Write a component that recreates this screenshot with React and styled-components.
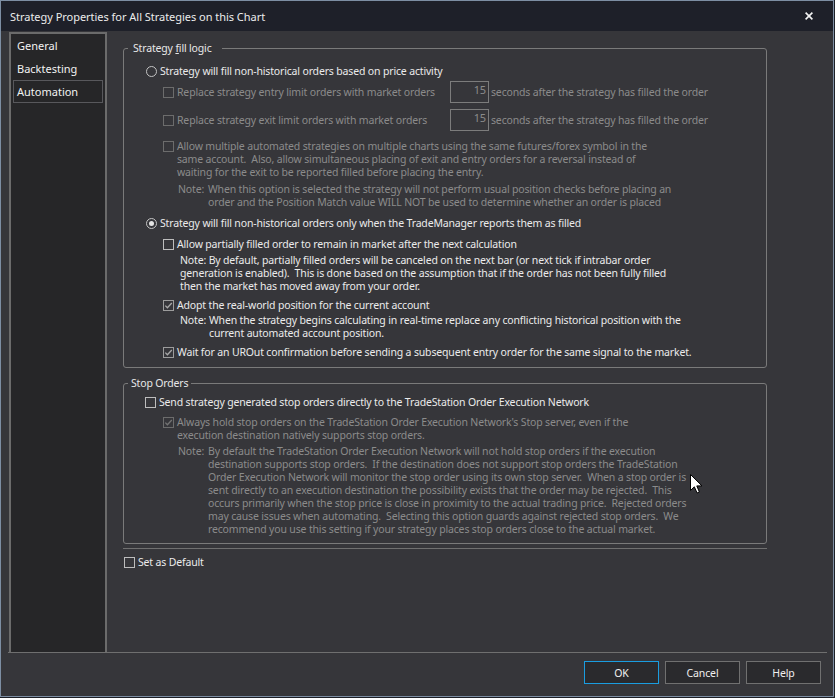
import React from "react";
import styled, { createGlobalStyle, css } from "styled-components";

const GlobalStyle = createGlobalStyle`
  html, body { margin: 0; padding: 0; }
  body {
    background: #1c1f26;
    font-family: "Noto Sans", "Open Sans", sans-serif;
  }
`;

const bodyText = css`
  font-size: 10.5px;
  letter-spacing: -0.16px;
  line-height: 13px;
`;

const Window = styled.div`
  position: relative;
  box-sizing: border-box;
  width: 834px;
  height: 697px;
  border: 1px solid #7d8ea3;
  background: #36363a;
  display: flex;
  flex-direction: column;
  overflow: hidden;
`;

const TitleBar = styled.div`
  flex: none;
  height: 30px;
  background: #1e2029;
  display: flex;
  align-items: center;
  padding-left: 9px;
  color: #ececec;
  font-size: 11px;
  letter-spacing: -0.03px;
`;

const Title = styled.span`
  flex: 1;
`;

const CloseButton = styled.span`
  width: 30px;
  height: 30px;
  margin-right: 9px;
  display: flex;
  align-items: center;
  justify-content: center;
`;

const Body = styled.div`
  flex: 1;
  min-height: 0;
  display: flex;
  flex-direction: column;
`;

const Main = styled.div`
  flex: 1;
  min-height: 0;
  display: flex;
  margin: 1px 6px 0 7px;
  border-bottom: 1px solid #6f6f6f;
`;

const Nav = styled.div`
  flex: none;
  width: 98px;
  margin-left: 1px;
  box-sizing: border-box;
  border: 2px solid #6b6b6b;
  border-bottom: none;
  background: #262628;
  padding-top: 0;
`;

const NavItem = styled.div`
  height: 23px;
  box-sizing: border-box;
  margin: 0 2px;
  padding-left: 3px;
  display: flex;
  align-items: center;
  font-size: 11px;
  color: #f2f2f2;
  border: 1px solid ${(p) => (p.$active ? "#58585c" : "transparent")};
`;

const Content = styled.div`
  flex: 1;
  padding: 9px 0 0 16px;
  display: flex;
  flex-direction: column;
  align-items: flex-start;
`;

const Group = styled.fieldset`
  margin: ${(p) => p.$mt || 0}px 0 0 0;
  padding: 0 0 ${(p) => p.$pb}px 0;
  min-width: 0;
  width: 644px;
  box-sizing: border-box;
  border: 1px solid #7a7a7a;
  border-radius: 3px;
`;

const Legend = styled.legend`
  margin-left: 4px;
  padding: 0 ${(p) => p.$pr}px 0 ${(p) => p.$pl}px;
  ${bodyText};
  line-height: 14px;
  color: #e8e8e8;
`;

const GroupBody = styled.div`
  padding-top: ${(p) => p.$pt}px;
  display: flex;
  flex-direction: column;
`;

const Option = styled.div`
  display: flex;
  align-items: flex-start;
  margin-top: ${(p) => p.$mt || 0}px;
  margin-left: ${(p) => p.$indent}px;
  ${bodyText};
  color: ${(p) => (p.$disabled ? "#8b8b8b" : "#ebebeb")};
`;

const InputRow = styled(Option)`
  align-items: center;
  height: 22px;
`;

const Box = styled.span`
  flex: none;
  box-sizing: border-box;
  width: 11px;
  height: 11px;
  margin-top: 1px;
  border: 1px solid
    ${(p) => (p.$disabled ? "#6c6c6c" : p.$checked ? "#9c9c9c" : "#bdbdbd")};
  display: flex;
  align-items: center;
  justify-content: center;
  ${InputRow} & {
    margin-top: 0;
  }
`;

const RadioRing = styled.span`
  flex: none;
  box-sizing: border-box;
  width: 11px;
  height: 11px;
  margin-top: 1px;
  border-radius: 50%;
  border: 1px solid #c4c4c4;
  display: flex;
  align-items: center;
  justify-content: center;
  &::after {
    content: "";
    display: ${(p) => (p.$checked ? "block" : "none")};
    width: 5px;
    height: 5px;
    border-radius: 50%;
    background: #e4e4e4;
  }
`;

const Label = styled.span`
  margin-left: 3px;
  white-space: pre;
  width: ${(p) => (p.$width ? `${p.$width}px` : "auto")};
  flex: none;
`;

const Line = styled.span`
  display: block;
`;

const NumberBox = styled.span`
  flex: none;
  box-sizing: border-box;
  width: 39px;
  height: 22px;
  border: 1px solid #7c7c7c;
  padding: 1px 2px 0 0;
  text-align: right;
  color: #8b8b8b;
  font-size: 11px;
  line-height: 14px;
`;

const Suffix = styled.span`
  margin-left: 2px;
  white-space: pre;
`;

const NoteRow = styled.div`
  display: flex;
  margin-top: ${(p) => p.$mt}px;
  margin-left: ${(p) => p.$indent}px;
  ${bodyText};
  color: ${(p) => (p.$disabled ? "#8b8b8b" : "#ebebeb")};
  white-space: pre;
`;

const NoteTag = styled.span`
  flex: none;
  width: ${(p) => p.$w}px;
`;

const Separator = styled.div`
  width: 644px;
  height: 1px;
  margin-top: 4px;
  background: #707070;
`;

const Footer = styled.div`
  flex: none;
  height: 43px;
  box-sizing: border-box;
  padding: 8px 12px 0 0;
  display: flex;
  justify-content: flex-end;
  align-items: flex-start;
  gap: 6px;
`;

const Button = styled.button`
  width: 75px;
  height: 23px;
  box-sizing: border-box;
  margin: 0;
  padding: 0;
  background: #2a2a2d;
  border: 1px solid ${(p) => (p.$primary ? "#1a9de0" : "#707070")};
  color: #f0f0f0;
  font-family: inherit;
  font-size: 10.5px;
  letter-spacing: -0.1px;
`;

const Pointer = styled.svg`
  position: absolute;
  left: 688px;
  top: 472px;
  pointer-events: none;
`;

function Check({ disabled }) {
  return (
    <svg width="9" height="9" viewBox="0 0 9 9">
      <polyline
        points="1.3,4.6 3.4,6.8 7.8,2"
        fill="none"
        stroke={disabled ? "#737373" : "#a8a8a8"}
        strokeWidth="1.3"
      />
    </svg>
  );
}

function CheckBox({ checked, disabled }) {
  return (
    <Box $checked={checked} $disabled={disabled}>
      {checked && <Check disabled={disabled} />}
    </Box>
  );
}

function Lines({ lines }) {
  return lines.map((l, i) => <Line key={i}>{l}</Line>);
}

function CheckOption({ mt, indent, checked, disabled, lines }) {
  return (
    <Option $mt={mt} $indent={indent} $disabled={disabled}>
      <CheckBox checked={checked} disabled={disabled} />
      <Label>
        <Lines lines={lines} />
      </Label>
    </Option>
  );
}

function RadioOption({ mt, indent, checked, text }) {
  return (
    <Option $mt={mt} $indent={indent}>
      <RadioRing $checked={checked} />
      <Label>{text}</Label>
    </Option>
  );
}

function DelayOption({ mt, text }) {
  return (
    <InputRow $mt={mt} $indent={39} $disabled>
      <CheckBox disabled />
      <Label $width={273}>{text}</Label>
      <NumberBox>15</NumberBox>
      <Suffix>seconds after the strategy has filled the order</Suffix>
    </InputRow>
  );
}

function Note({ mt, indent, tag, disabled, lines }) {
  return (
    <NoteRow $mt={mt} $indent={indent} $disabled={disabled}>
      <NoteTag $w={tag}>Note:</NoteTag>
      <span>
        <Lines lines={lines} />
      </span>
    </NoteRow>
  );
}

const navItems = ["General", "Backtesting", "Automation"];

export default function App() {
  return (
    <>
      <GlobalStyle />
      <Window>
        <TitleBar>
          <Title>Strategy Properties for All Strategies on this Chart</Title>
          <CloseButton>
            <svg width="8" height="8" viewBox="0 0 8 8">
              <path d="M0.6 0.6 L7.4 7.4 M7.4 0.6 L0.6 7.4" stroke="#f4f4f4" strokeWidth="1.6" />
            </svg>
          </CloseButton>
        </TitleBar>
        <Body>
          <Main>
            <Nav>
              {navItems.map((n) => (
                <NavItem key={n} $active={n === "Automation"}>
                  {n}
                </NavItem>
              ))}
            </Nav>
            <Content>
              <Group $pb={8}>
                <Legend $pl={5} $pr={10}>
                  Strategy <u>f</u>ill logic
                </Legend>
                <GroupBody $pt={10}>
                  <RadioOption
                    mt={0}
                    indent={22}
                    text="Strategy will fill non-historical orders based on price activity"
                  />
                  <DelayOption mt={3} text="Replace strategy entry limit orders with market orders" />
                  <DelayOption mt={6} text="Replace strategy exit limit orders with market orders" />
                  <CheckOption
                    mt={9}
                    indent={39}
                    disabled
                    lines={[
                      "Allow multiple automated strategies on multiple charts using the same futures/forex symbol in the",
                      "same account.  Also, allow simultaneous placing of exit and entry orders for a reversal instead of",
                      "waiting for the exit to be reported filled before placing the entry.",
                    ]}
                  />
                  <Note
                    mt={4}
                    indent={54}
                    tag={30}
                    disabled
                    lines={[
                      "When this option is selected the strategy will not perform usual position checks before placing an",
                      "order and the Position Match value WILL NOT be used to determine whether an order is placed",
                    ]}
                  />
                  <RadioOption
                    mt={8}
                    indent={22}
                    checked
                    text="Strategy will fill non-historical orders only when the TradeManager reports them as filled"
                  />
                  <CheckOption
                    mt={8}
                    indent={39}
                    lines={["Allow partially filled order to remain in market after the next calculation"]}
                  />
                  <NoteRow $mt={3} $indent={56}>
                    <span>
                      <Lines
                        lines={[
                          "Note: By default, partially filled orders will be canceled on the next bar (or next tick if intrabar order",
                          "generation is enabled).  This is done based on the assumption that if the order has not been fully filled",
                          "then the market has moved away from your order.",
                        ]}
                      />
                    </span>
                  </NoteRow>
                  <CheckOption
                    mt={6}
                    indent={39}
                    checked
                    lines={["Adopt the real-world position for the current account"]}
                  />
                  <Note
                    mt={2}
                    indent={56}
                    tag={29}
                    lines={[
                      "When the strategy begins calculating in real-time replace any conflicting historical position with the",
                      "current automated account position.",
                    ]}
                  />
                  <CheckOption
                    mt={6}
                    indent={39}
                    checked
                    lines={[
                      "Wait for an UROut confirmation before sending a subsequent entry order for the same signal to the market.",
                    ]}
                  />
                </GroupBody>
              </Group>

              <Group $mt={8} $pb={7}>
                <Legend $pl={3} $pr={3}>Stop Orders</Legend>
                <GroupBody $pt={6}>
                  <CheckOption
                    mt={0}
                    indent={21}
                    lines={["Send strategy generated stop orders directly to the TradeStation Order Execution Network"]}
                  />
                  <CheckOption
                    mt={7}
                    indent={39}
                    checked
                    disabled
                    lines={[
                      "Always hold stop orders on the TradeStation Order Execution Network's Stop server, even if the",
                      "execution destination natively supports stop orders.",
                    ]}
                  />
                  <Note
                    mt={3}
                    indent={54}
                    tag={30}
                    disabled
                    lines={[
                      "By default the TradeStation Order Execution Network will not hold stop orders if the execution",
                      "destination supports stop orders.  If the destination does not support stop orders the TradeStation",
                      "Order Execution Network will monitor the stop order using its own stop server.  When a stop order is",
                      "sent directly to an execution destination the possibility exists that the order may be rejected.  This",
                      "occurs primarily when the stop price is close in proximity to the actual trading price.  Rejected orders",
                      "may cause issues when automating.  Selecting this option guards against rejected stop orders.  We",
                      "recommend you use this setting if your strategy places stop orders close to the actual market.",
                    ]}
                  />
                </GroupBody>
              </Group>

              <Separator />
              <CheckOption mt={7} indent={1} lines={["Set as Default"]} />
            </Content>
          </Main>
          <Footer>
            <Button $primary>OK</Button>
            <Button>Cancel</Button>
            <Button>Help</Button>
          </Footer>
        </Body>
        <Pointer width="14" height="22" viewBox="0 0 14 22">
          <path
            d="M1.5 1.5 V17.5 L5.3 13.8 L8.1 20 L10.4 19 L7.8 12.9 H13 Z"
            fill="#ffffff"
            stroke="#000000"
            strokeWidth="1"
            strokeLinejoin="miter"
          />
        </Pointer>
      </Window>
    </>
  );
}
